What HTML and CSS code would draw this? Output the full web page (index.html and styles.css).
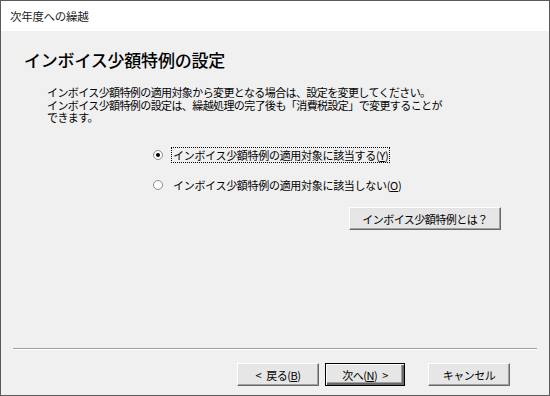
FILE: index.html
```html
<!DOCTYPE html>
<html lang="ja">
<head>
    <meta charset="UTF-8">
    <meta name="viewport" content="width=device-width, initial-scale=1.0">
    <title>次年度への繰越</title>
    <link rel="stylesheet" href="styles.css">
</head>
<body>

<div class="window">
    <div class="titlebar">次年度への繰越</div>

    <div class="content">
        <h1 class="heading">インボイス少額特例の設定</h1>

        <div class="message">
            <div class="line">インボイス少額特例の適用対象から変更となる場合は、設定を変更してください。</div>
            <div class="line">インボイス少額特例の設定は、繰越処理の完了後も「消費税設定」で変更することが</div>
            <div class="line">できます。</div>
        </div>

        <div class="options">
            <label class="option">
                <span class="radio checked"></span>
                <span class="option-text focused">インボイス少額特例の適用対象に該当する(<u>Y</u>)</span>
            </label>
            <label class="option">
                <span class="radio"></span>
                <span class="option-text">インボイス少額特例の適用対象に該当しない(<u>O</u>)</span>
            </label>
        </div>

        <div class="help-row">
            <button class="btn help">インボイス少額特例とは？</button>
        </div>

        <div class="footer">
            <div class="separator"></div>
            <div class="buttons">
                <button class="btn">&lt;&ensp;戻る(<u>B</u>)</button>
                <button class="btn default">次へ(<u>N</u>)&ensp;&gt;</button>
                <button class="btn cancel">キャンセル</button>
            </div>
        </div>
    </div>
</div>

</body>
</html>
```

FILE: styles.css
```css
body {
    margin: 0;
    font-family: "Noto Sans CJK JP", "Noto Sans", sans-serif;
    color: #000;
}
.window {
    width: 550px;
    height: 396px;
    box-sizing: border-box;
    border: 1px solid #5a5a5a;
    display: flex;
    flex-direction: column;
    background: #f0f0f0;
}
.titlebar {
    height: 30px;
    line-height: 30px;
    padding-left: 9px;
    font-size: 11.5px;
    letter-spacing: -0.3px;
    background: #fff;
    color: #222;
}
.content {
    flex: 1;
    display: flex;
    flex-direction: column;
    padding: 17px 0 9px 0;
}
.heading {
    margin: 0 0 0 23px;
    font-size: 17px;
    line-height: 24px;
    font-weight: 500;
    letter-spacing: -0.2px;
}
.message {
    margin: 14px 0 0 46px;
    font-size: 11px;
    letter-spacing: -0.6px;
}
.message .line {
    height: 12.5px;
    line-height: 12.5px;
}
.options {
    margin: 23px 0 0 152px;
    display: flex;
    flex-direction: column;
    gap: 14px;
}
.option {
    display: flex;
    align-items: center;
    height: 16px;
    font-size: 11px;
    letter-spacing: -0.3px;
}
.radio {
    width: 10px;
    height: 10px;
    border: 1px solid #8c8c8c;
    border-radius: 50%;
    background: #fff;
    box-sizing: border-box;
    display: flex;
    align-items: center;
    justify-content: center;
    margin-right: 8px;
}
.radio.checked::after {
    content: "";
    width: 4px;
    height: 4px;
    border-radius: 50%;
    background: #000;
}
.option-text {
    border: 1px dotted transparent;
    padding: 0 1px;
    line-height: 14px;
}
.option-text.focused {
    border-color: #000;
}
.help-row {
    margin: 12px 0 0 348px;
}
.btn {
    font-family: inherit;
    font-size: 11px;
    letter-spacing: -0.5px;
    height: 23px;
    padding: 0;
    color: #000;
    background: #e6e6e6;
    border: 1px solid;
    border-color: #fff #696969 #696969 #fff;
    box-shadow: inset -1px -1px 0 #a0a0a0, inset 1px 1px 0 #e3e3e3;
}
.btn.help {
    width: 152px;
}
.footer {
    margin-top: auto;
}
.separator {
    margin: 0 12px;
    height: 1px;
    border-top: 1px solid #a0a0a0;
    background: #fff;
}
.buttons {
    display: flex;
    margin: 13px 39px 0 0;
    justify-content: flex-end;
}
.buttons .btn {
    width: 82px;
    margin-left: 6px;
}
.buttons .btn.default {
    border: 1px solid #000;
    box-shadow: inset 1px 1px 0 #fff, inset -2px -2px 0 #696969, inset -3px -3px 0 #a0a0a0;
    width: 80px;
}
.buttons .btn.cancel {
    margin-left: 23px;
}
```
